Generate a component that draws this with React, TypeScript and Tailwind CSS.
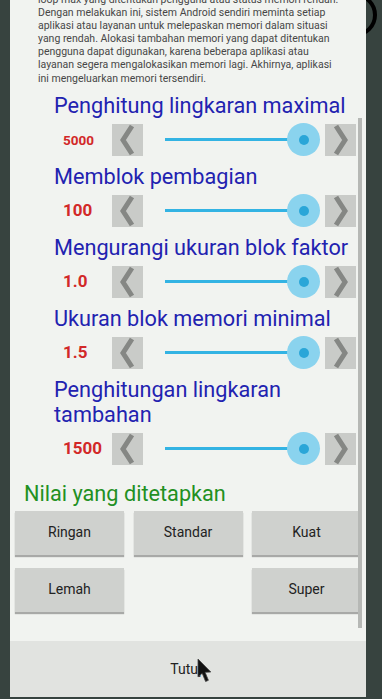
import React from "react";

const sliders = [
  { title: ["Penghitung lingkaran maximal"], value: "5000", small: true },
  { title: ["Memblok pembagian"], value: "100" },
  { title: ["Mengurangi ukuran blok faktor"], value: "1.0" },
  { title: ["Ukuran blok memori minimal"], value: "1.5" },
  { title: ["Penghitungan lingkaran", "tambahan"], value: "1500" },
];

const paragraph = [
  "loop max yang ditentukan pengguna atau status memori rendah.",
  "Dengan melakukan ini, sistem Android sendiri meminta setiap",
  "aplikasi atau layanan untuk melepaskan memori dalam situasi",
  "yang rendah. Alokasi tambahan memori yang dapat ditentukan",
  "pengguna dapat digunakan, karena beberapa aplikasi atau",
  "layanan segera mengalokasikan memori lagi. Akhirnya, aplikasi",
  "ini mengeluarkan memori tersendiri.",
];

function ArrowButton({ dir }: { dir: "left" | "right" }) {
  return (
    <div className="w-[31px] h-[32px] bg-[#c9cbc8] flex items-center justify-center shrink-0">
      <svg width="31" height="32" viewBox="0 0 31 32">
        <polyline
          points={dir === "left" ? "20,2 11,16 20,30" : "11,2 20,16 11,30"}
          fill="none"
          stroke="#858784"
          strokeWidth="5"
          strokeLinejoin="miter"
        />
      </svg>
    </div>
  );
}

function SliderRow({ value, small }: { value: string; small?: boolean }) {
  return (
    <div className="mt-[4px] h-[36px] flex items-center pl-[53px] pr-[10px]">
      <div
        className={
          small
            ? "w-[49px] font-bold text-[13.5px] text-[#d22828]"
            : "w-[49px] font-bold text-[17px] text-[#d22828]"
        }
      >
        {value}
      </div>
      <ArrowButton dir="left" />
      <div className="flex-1 flex items-center pl-[22px] pr-[5px]">
        <div className="flex-1 h-[3px] bg-[#33b3e3]" />
        <div className="-ml-[16px] w-[33px] h-[33px] rounded-full bg-[#8ad3ee] flex items-center justify-center shrink-0">
          <div className="w-[10px] h-[10px] rounded-full bg-[#2aa6d8]" />
        </div>
      </div>
      <ArrowButton dir="right" />
    </div>
  );
}

function PresetButton({ label, className = "" }: { label: string; className?: string }) {
  return (
    <div
      className={
        "h-[44px] bg-[#cfd1ce] shadow-[0_2px_1px_rgba(0,0,0,0.3)] flex items-center justify-center text-[14px] text-[#222] " +
        className
      }
    >
      {label}
    </div>
  );
}

export default function App() {
  return (
    <div className="relative w-[382px] h-[699px] overflow-hidden bg-[#37433f] font-[Roboto,sans-serif]">
      <div className="absolute left-[333px] top-[-7px] w-[44px] h-[44px] rounded-full border-[4px] border-black" />

      <div className="relative ml-[10px] w-[356px] h-[697px] bg-[#f1f3f0] flex flex-col">
        <div className="relative h-[641px] overflow-hidden">
          <div className="-mt-[7px] pl-[28px] text-[10.5px] leading-[13.1px] text-[#474747] whitespace-nowrap">
            {paragraph.map((line) => (
              <div key={line}>{line}</div>
            ))}
          </div>

          <div>
            {sliders.map((s, i) => (
              <div key={s.value}>
                <div
                  className={
                    i === 0
                      ? "mt-[8px] pl-[44px] text-[21.7px] leading-[25px] text-[#2222b0]"
                      : "mt-[6px] pl-[44px] text-[21.7px] leading-[25px] text-[#2222b0]"
                  }
                >
                  {s.title.map((t) => (
                    <div key={t}>{t}</div>
                  ))}
                </div>
                <SliderRow value={s.value} small={s.small} />
              </div>
            ))}
          </div>

          <div className="mt-[14px] pl-[14px] text-[21.7px] leading-[25px] text-[#229022]">
            Nilai yang ditetapkan
          </div>

          <div className="mt-[5px] px-[5px] grid grid-cols-3 gap-x-[9.5px] gap-y-[13px]">
            <PresetButton label="Ringan" />
            <PresetButton label="Standar" />
            <PresetButton label="Kuat" />
            <PresetButton label="Lemah" />
            <PresetButton label="Super" className="col-start-3" />
          </div>

          <div className="absolute right-[4px] top-[118px] w-[4px] h-[510px] bg-[#b6b8b5] z-10" />
        </div>

        <div className="flex-1 bg-[#e1e3e0] flex items-center justify-center text-[14px] text-[#222]">
          Tutup
        </div>

        <svg
          className="absolute left-[187px] top-[658px]"
          width="15"
          height="25"
          viewBox="0 0 15 25"
        >
          <path
            d="M1 1 L1 19 L5.2 15.2 L8.6 23.5 L11.4 22.3 L8.1 14.3 L13.8 14 Z"
            fill="#111"
            stroke="#444"
            strokeWidth="0.8"
          />
        </svg>
      </div>
    </div>
  );
}
